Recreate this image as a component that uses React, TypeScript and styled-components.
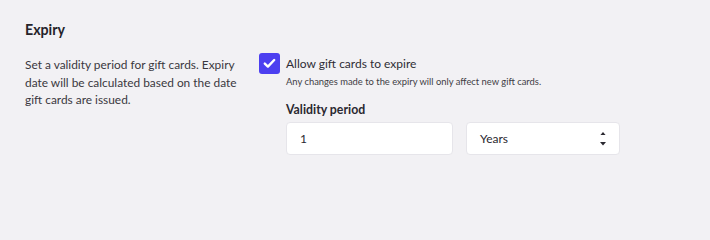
import styled, { createGlobalStyle } from 'styled-components';

const GlobalStyle = createGlobalStyle`
  html, body {
    margin: 0;
    padding: 0;
    background: #f2f1f4;
  }
  body {
    font-family: Lato, "Liberation Sans", sans-serif;
    color: #2a2830;
  }
`;

const Section = styled.section`
  width: 710px;
  height: 203px;
  box-sizing: border-box;
  padding: 21px 25px 0 25px;
  background: #f2f1f4;
`;

const SectionTitle = styled.h2`
  margin: 0 0 17px;
  font-size: 14.2px;
  line-height: 18px;
  font-weight: 700;
  color: #25232a;
`;

const Columns = styled.div`
  display: grid;
  grid-template-columns: 234px 1fr;
`;

const Description = styled.p`
  margin: 0;
  max-width: 214px;
  font-size: 11.9px;
  line-height: 17.6px;
  color: #3a3840;
`;

const Settings = styled.div`
  display: flex;
  flex-direction: column;
`;

const CheckRow = styled.label`
  display: flex;
  align-items: flex-start;
  gap: 6px;
`;

const CheckBox = styled.span`
  flex: none;
  width: 21px;
  height: 21px;
  margin-top: -3px;
  border-radius: 3px;
  background: #4c3ff0;
  display: flex;
  align-items: center;
  justify-content: center;
`;

const CheckText = styled.div`
  display: flex;
  flex-direction: column;
`;

const CheckLabel = styled.span`
  font-size: 12px;
  line-height: 15px;
  color: #2f2d35;
`;

const Hint = styled.span`
  margin-top: 5px;
  font-size: 9.4px;
  line-height: 12px;
  color: #3f3d45;
`;

const FieldGroup = styled.div`
  margin: 14px 0 0 27px;
  display: flex;
  flex-direction: column;
`;

const FieldLabel = styled.span`
  font-size: 12.3px;
  line-height: 15px;
  font-weight: 700;
  color: #2a2830;
  margin-bottom: 5px;
`;

const FieldRow = styled.div`
  display: flex;
  gap: 13px;
`;

const Box = styled.div<{ $width: number }>`
  width: ${(p) => p.$width}px;
  height: 33px;
  box-sizing: border-box;
  background: #ffffff;
  border: 1px solid #e6e5ea;
  border-radius: 4px;
  display: flex;
  align-items: center;
  justify-content: space-between;
  padding: 0 12px 0 13px;
  font-size: 12px;
  color: #2a2830;
`;

const Arrows = styled.span`
  display: flex;
  flex-direction: column;
  gap: 7px;
  margin-right: 1px;
`;

export default function App() {
  return (
    <>
      <GlobalStyle />
      <Section>
        <SectionTitle>Expiry</SectionTitle>
        <Columns>
          <Description>
            Set a validity period for gift cards. Expiry date will be calculated based on the date gift cards are issued.
          </Description>
          <Settings>
            <CheckRow>
              <CheckBox>
                <svg width="13" height="11" viewBox="0 0 13 11">
                  <path d="M1.8 5.6 L4.9 8.6 L11.2 2" fill="none" stroke="#fff" strokeWidth="2.4" strokeLinecap="round" strokeLinejoin="round" />
                </svg>
              </CheckBox>
              <CheckText>
                <CheckLabel>Allow gift cards to expire</CheckLabel>
                <Hint>Any changes made to the expiry will only affect new gift cards.</Hint>
              </CheckText>
            </CheckRow>
            <FieldGroup>
              <FieldLabel>Validity period</FieldLabel>
              <FieldRow>
                <Box $width={167}>1</Box>
                <Box $width={154}>
                  Years
                  <Arrows>
                    <svg width="6" height="3.5" viewBox="0 0 6 3.5"><path d="M3 0 L6 3.5 L0 3.5 Z" fill="#2a2830" /></svg>
                    <svg width="6" height="3.5" viewBox="0 0 6 3.5"><path d="M0 0 L6 0 L3 3.5 Z" fill="#2a2830" /></svg>
                  </Arrows>
                </Box>
              </FieldRow>
            </FieldGroup>
          </Settings>
        </Columns>
      </Section>
    </>
  );
}
